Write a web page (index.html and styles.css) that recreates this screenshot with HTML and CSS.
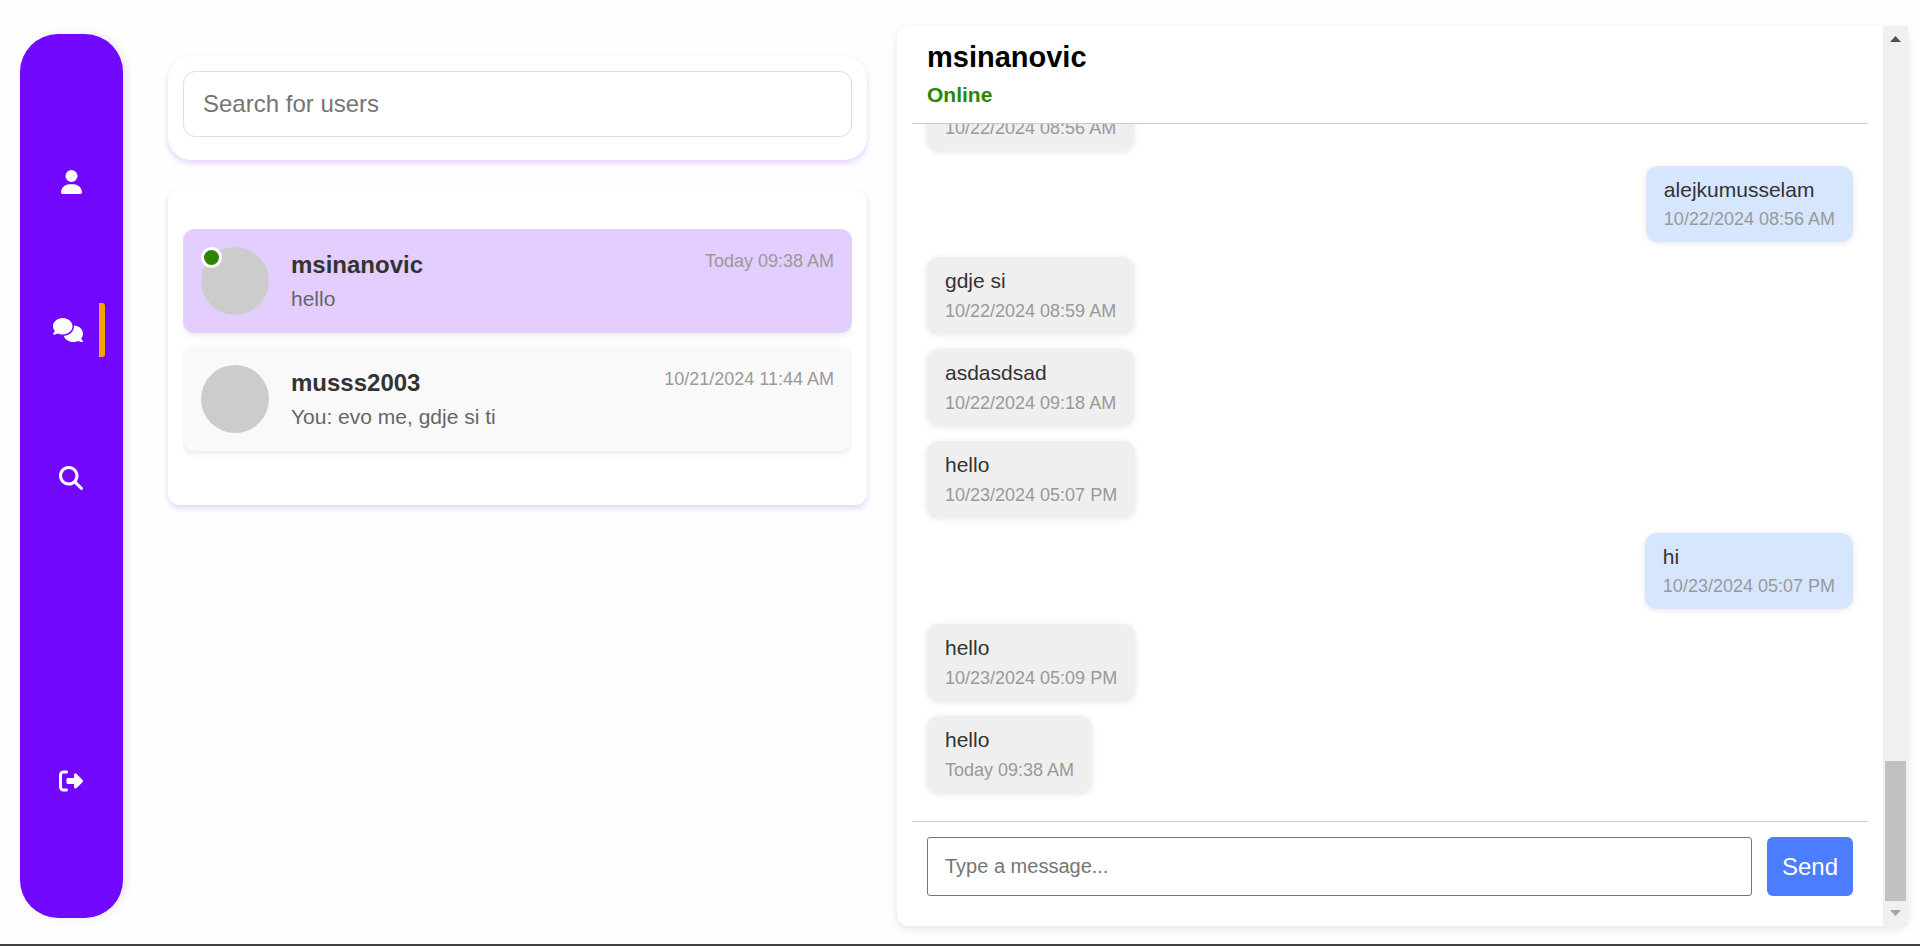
FILE: index.html
```html
<!DOCTYPE html>
<html lang="en">
<head>
<meta charset="utf-8">
<meta name="viewport" content="width=device-width, initial-scale=1">
<title>Messages</title>
<link rel="stylesheet" href="styles.css">
</head>
<body>
<div class="app">
  <nav class="sidebar" aria-label="Main">
    <div class="nav-group">
      <a class="nav-link" href="#profile" aria-label="Profile">
        <svg class="icon" viewBox="0 0 448 512" aria-hidden="true"><path d="M224 256A128 128 0 1 0 224 0a128 128 0 1 0 0 256zm-45.7 48C79.8 304 0 383.8 0 482.3C0 498.7 13.3 512 29.7 512H418.3c16.4 0 29.7-13.3 29.7-29.7C448 383.8 368.2 304 269.7 304H178.3z"/></svg>
      </a>
      <a class="nav-link active" href="#messages" aria-label="Messages" aria-current="page">
        <svg class="icon" viewBox="0 0 640 512" aria-hidden="true"><path d="M208 352c114.9 0 208-78.8 208-176S322.9 0 208 0S0 78.8 0 176c0 38.6 14.7 74.3 39.6 103.4c-3.5 9.4-8.7 17.7-14.2 24.7c-4.8 6.2-9.7 11-13.3 14.3c-1.8 1.6-3.3 2.9-4.3 3.7c-.5 .4-.9 .7-1.1 .8l-.2 .2C1 327.2-1.4 334.4 .8 340.9S9.1 352 16 352c21.8 0 43.8-5.6 62.1-12.5c9.2-3.5 17.8-7.4 25.2-11.4C134.1 343.3 169.8 352 208 352zM448 176c0 112.3-99.1 196.9-216.5 207C255.8 457.4 336.4 512 432 512c38.2 0 73.9-8.7 104.7-23.9c7.5 4 16 7.9 25.2 11.4c18.3 6.9 40.3 12.5 62.1 12.5c6.9 0 13.1-4.5 15.2-11.1c2.1-6.6-.2-13.8-5.8-17.9l-.2-.2c-.2-.2-.6-.4-1.1-.8c-1-.8-2.5-2-4.3-3.7c-3.6-3.3-8.5-8.1-13.3-14.3c-5.5-7-10.7-15.4-14.2-24.7c24.9-29 39.6-64.7 39.6-103.4c0-92.8-84.9-168.9-192.6-175.5c.4 5.1 .6 10.3 .6 15.5z"/></svg>
      </a>
      <a class="nav-link" href="#search" aria-label="Search">
        <svg class="icon" viewBox="0 0 512 512" aria-hidden="true"><path d="M416 208c0 45.9-14.9 88.3-40 122.7L502.6 457.4c12.5 12.5 12.5 32.8 0 45.3s-32.8 12.5-45.3 0L330.7 376c-34.4 25.2-76.8 40-122.7 40C93.1 416 0 322.9 0 208S93.1 0 208 0S416 93.1 416 208zM208 352a144 144 0 1 0 0-288 144 144 0 1 0 0 288z"/></svg>
      </a>
    </div>
    <a class="nav-link" href="#logout" aria-label="Log out">
      <svg class="icon" viewBox="0 0 512 512" aria-hidden="true"><path d="M377.9 105.9L500.7 228.7c7.2 7.2 11.3 17.1 11.3 27.3s-4.1 20.1-11.3 27.3L377.9 406.1c-6.4 6.4-15 9.9-24 9.9c-18.7 0-33.9-15.2-33.9-33.9l0-62.1-128 0c-17.7 0-32-14.3-32-32l0-64c0-17.7 14.3-32 32-32l128 0 0-62.1c0-18.7 15.2-33.9 33.9-33.9c9 0 17.6 3.6 24 9.9zM160 96L96 96c-17.7 0-32 14.3-32 32l0 256c0 17.7 14.3 32 32 32l64 0c17.7 0 32 14.3 32 32s-14.3 32-32 32l-64 0c-53 0-96-43-96-96L0 128C0 75 43 32 96 32l64 0c17.7 0 32 14.3 32 32s-14.3 32-32 32z"/></svg>
    </a>
  </nav>

  <main class="people">
    <form class="search-card" role="search">
      <input class="search-input" type="text" placeholder="Search for users" aria-label="Search for users">
    </form>
    <section class="list-card" aria-label="Conversations">
      <ul class="list">
        <li class="conversation selected">
          <div class="avatar"><span class="online-dot"></span></div>
          <div class="summary">
            <h2 class="name">msinanovic</h2>
            <p class="preview">hello</p>
          </div>
          <time class="when">Today 09:38 AM</time>
        </li>
        <li class="conversation">
          <div class="avatar"></div>
          <div class="summary">
            <h2 class="name">musss2003</h2>
            <p class="preview">You: evo me, gdje si ti</p>
          </div>
          <time class="when">10/21/2024 11:44 AM</time>
        </li>
      </ul>
    </section>
  </main>

  <section class="chat" aria-label="Chat">
    <div class="chat-body">
      <header class="chat-header">
        <h1 class="chat-name">msinanovic</h1>
        <p class="chat-status">Online</p>
      </header>
      <div class="messages">
        <div class="bubble"><time class="stamp">10/22/2024 08:56 AM</time></div>
        <div class="bubble sent"><p class="text">alejkumusselam</p><time class="stamp">10/22/2024 08:56 AM</time></div>
        <div class="bubble"><p class="text">gdje si</p><time class="stamp">10/22/2024 08:59 AM</time></div>
        <div class="bubble"><p class="text">asdasdsad</p><time class="stamp">10/22/2024 09:18 AM</time></div>
        <div class="bubble"><p class="text">hello</p><time class="stamp">10/23/2024 05:07 PM</time></div>
        <div class="bubble sent"><p class="text">hi</p><time class="stamp">10/23/2024 05:07 PM</time></div>
        <div class="bubble"><p class="text">hello</p><time class="stamp">10/23/2024 05:09 PM</time></div>
        <div class="bubble"><p class="text">hello</p><time class="stamp">Today 09:38 AM</time></div>
      </div>
      <form class="composer">
        <input class="message-input" type="text" placeholder="Type a message..." aria-label="Type a message">
        <button class="send" type="button">Send</button>
      </form>
    </div>
    <div class="scrollbar" aria-hidden="true">
      <svg class="arrow" viewBox="0 0 25 25"><path fill="#505050" d="M7 16L12.5 10L18 16z"/></svg>
      <div class="track"><div class="thumb"></div></div>
      <svg class="arrow" viewBox="0 0 25 25"><path fill="#a3a3a3" d="M7 9H18L12.5 15z"/></svg>
    </div>
  </section>
</div>
</body>
</html>
```
FILE: styles.css
```css
* {
  box-sizing: border-box;
}

body {
  margin: 0;
  background: #fefefe;
  font-family: "Liberation Sans", Arial, sans-serif;
  color: #333;
}

h1,
h2,
p,
ul {
  margin: 0;
  padding: 0;
}

.app {
  display: flex;
  height: 100vh;
  padding: 26px 12px 18px 20px;
  border-bottom: 2px solid #424242;
}

/* Sidebar */
.sidebar {
  display: flex;
  flex: none;
  flex-direction: column;
  justify-content: space-between;
  width: 103px;
  margin: 8px 45px 8px 0;
  padding: 121px 18px 110px 17px;
  border-radius: 38px;
  background: #7308ff;
  box-shadow: 3px 0 8px rgba(0, 0, 0, 0.1);
}

.nav-group {
  display: flex;
  flex-direction: column;
  gap: 94px;
}

.nav-link {
  display: flex;
  align-items: center;
  justify-content: center;
  height: 54px;
}

.nav-link.active {
  border-right: 6px solid #f5a300;
  border-radius: 0 3px 3px 0;
}

.icon {
  height: 24px;
  fill: #fff;
}

/* Conversations */
.people {
  display: flex;
  flex: 699 1 0;
  flex-direction: column;
  gap: 30px;
  min-width: 0;
  margin-right: 30px;
  padding-top: 30px;
}

.search-card,
.list-card {
  background: #fff;
  box-shadow: 0 3px 6px rgba(115, 8, 255, 0.18);
}

.search-card {
  padding: 15px 15px 23px;
  border-radius: 23px;
}

.search-input {
  display: block;
  width: 100%;
  height: 66px;
  padding: 0 19px;
  border: 1px solid #ddd;
  border-radius: 12px;
  background: #fff;
  font: 24px "Liberation Sans", Arial, sans-serif;
}

.search-input::placeholder,
.message-input::placeholder {
  color: #757575;
}

.list-card {
  padding: 39px 15px;
  border-radius: 12px;
}

.list {
  display: flex;
  flex-direction: column;
  gap: 14px;
  overflow: hidden;
  padding-bottom: 15px;
  list-style: none;
}

.conversation {
  display: flex;
  align-items: center;
  padding: 18px;
  border-radius: 12px;
  background: #f9f9f9;
  box-shadow: 0 2px 6px rgba(0, 0, 0, 0.1);
}

.conversation.selected {
  background: #e3ceff;
}

.avatar {
  position: relative;
  flex: none;
  width: 68px;
  height: 68px;
  border-radius: 50%;
  background: #ccc;
}

.online-dot {
  position: absolute;
  top: 0;
  left: 0;
  width: 21px;
  height: 21px;
  border: 3px solid #fff;
  border-radius: 50%;
  background: #2e8500;
}

.summary {
  flex: 1;
  min-width: 0;
  margin-left: 22px;
}

.name {
  margin-bottom: 10px;
  font-size: 24px;
  line-height: 25px;
}

.preview {
  color: #666;
  font-size: 21px;
  line-height: 24px;
}

.when {
  align-self: flex-start;
  color: #999;
  font-size: 18px;
  line-height: 29px;
}

/* Chat */
.chat {
  display: flex;
  flex: 1011 1 0;
  min-width: 0;
  border-radius: 12px;
  background: #fff;
  box-shadow: 0 3px 8px rgba(0, 0, 0, 0.1);
}

.chat-body {
  display: flex;
  flex: 1;
  flex-direction: column;
  min-width: 0;
  padding: 15px;
}

.chat-header {
  padding: 0 15px 16px;
  border-bottom: 1px solid #ccc;
}

.chat-name {
  margin-bottom: 9px;
  color: #000;
  font-size: 29px;
  line-height: 33px;
}

.chat-status {
  color: #2e8500;
  font-size: 21px;
  font-weight: bold;
  line-height: 24px;
}

.messages {
  display: flex;
  flex: 1;
  flex-direction: column;
  align-items: flex-start;
  justify-content: flex-end;
  gap: 15px;
  min-height: 0;
  overflow: hidden;
  padding: 0 15px 28px;
}

.bubble {
  flex: none;
  padding: 12px 18px 11px;
  border-radius: 12px;
  background: #efefef;
  box-shadow: 0 1px 6px rgba(0, 0, 0, 0.1);
}

.bubble.sent {
  align-self: flex-end;
  background: #d6e6ff;
}

.text {
  margin-bottom: 6px;
  font-size: 21px;
  line-height: 24px;
}

.sent .text {
  margin-bottom: 5px;
}

.stamp {
  display: block;
  color: #999;
  font-size: 18px;
  line-height: 24px;
}

.composer {
  display: flex;
  gap: 15px;
  padding: 15px;
  border-top: 1px solid #ccc;
}

.message-input {
  flex: 1;
  min-width: 0;
  height: 59px;
  padding: 0 17px;
  border: 1px solid #767676;
  border-radius: 3px;
  background: #fff;
  font: 20px "Liberation Sans", Arial, sans-serif;
}

.send {
  padding: 0 15px;
  border: 0;
  border-radius: 6px;
  background: #4c7cff;
  color: #fff;
  font: 24px "Liberation Sans", Arial, sans-serif;
}

.scrollbar {
  display: flex;
  flex: none;
  flex-direction: column;
  width: 25px;
  background: #f0f0f0;
}

.arrow {
  flex: none;
  width: 25px;
  height: 25px;
}

.track {
  display: flex;
  flex: 1;
  align-items: flex-end;
  padding: 0 2px;
}

.thumb {
  width: 100%;
  height: 16.5%;
  background: #c1c1c1;
}
```
